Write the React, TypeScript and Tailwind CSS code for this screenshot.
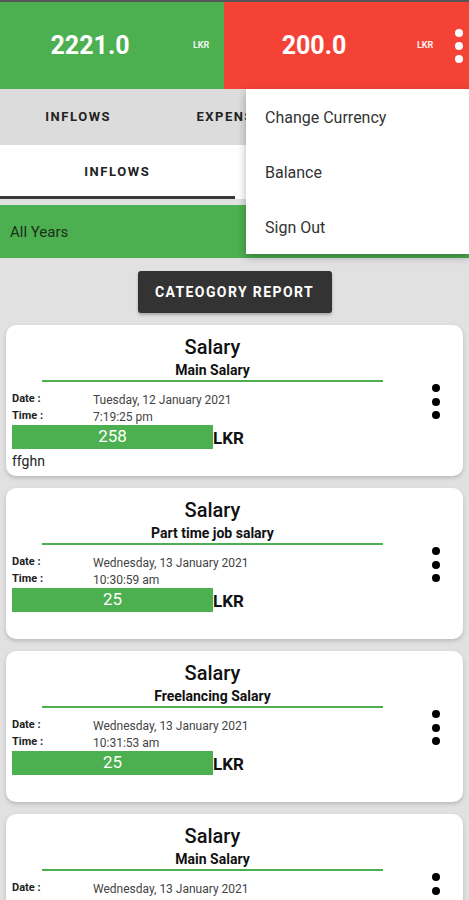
import React from 'react';

type Entry = {
  category: string;
  title: string;
  date: string;
  time: string;
  amount: string;
  note?: string;
};

const ENTRIES: Entry[] = [
  { category: 'Salary', title: 'Main Salary', date: 'Tuesday, 12 January 2021', time: '7:19:25 pm', amount: '258', note: 'ffghn' },
  { category: 'Salary', title: 'Part time job salary', date: 'Wednesday, 13 January 2021', time: '10:30:59 am', amount: '25' },
  { category: 'Salary', title: 'Freelancing Salary', date: 'Wednesday, 13 January 2021', time: '10:31:53 am', amount: '25' },
  { category: 'Salary', title: 'Main Salary', date: 'Wednesday, 13 January 2021', time: '10:31:59 am', amount: '50' },
];

function Dots({ color, gap }: { color: string; gap: string }) {
  return (
    <div className={`flex flex-col items-center ${gap}`}>
      <span className={`h-[8px] w-[8px] rounded-full ${color}`} />
      <span className={`h-[8px] w-[8px] rounded-full ${color}`} />
      <span className={`h-[8px] w-[8px] rounded-full ${color}`} />
    </div>
  );
}

function Total({ value }: { value: string }) {
  return (
    <div className="flex w-[224px] items-center">
      <span className="w-[180px] text-center text-[25px] font-bold text-white">{value}</span>
      <span className="ml-[13px] pt-[1px] text-[9px] font-bold text-white/90">LKR</span>
    </div>
  );
}

function EntryCard({ entry }: { entry: Entry }) {
  return (
    <div className="mx-[6px] flex h-[151px] rounded-[10px] bg-white shadow-[0_2px_4px_rgba(0,0,0,0.18)]">
      <div className="w-[413px] px-[6px] pt-[10px]">
        <div className="text-center text-[20px] font-medium leading-[24px] text-[#111]">{entry.category}</div>
        <div className="mt-[2px] text-center text-[14px] font-bold leading-[18px] text-[#111]">{entry.title}</div>
        <div className="mx-auto mt-[1px] h-[2px] w-[341px] bg-[#4caf50]" />
        <div className="mt-[9px] flex h-[17px] items-center">
          <span className="w-[81px] text-[11px] font-bold text-[#222]">Date :</span>
          <span className="text-[12px] text-[#444]">{entry.date}</span>
        </div>
        <div className="flex h-[17px] items-center">
          <span className="w-[81px] text-[11px] font-bold text-[#222]">Time :</span>
          <span className="text-[12px] text-[#444]">{entry.time}</span>
        </div>
        <div className="flex h-[24px] items-center">
          <span className="flex h-full w-[201px] items-center justify-center bg-[#4caf50] text-[17px] text-white">
            {entry.amount}
          </span>
          <span className="pt-[4px] text-[17px] font-bold text-[#111]">LKR</span>
        </div>
        {entry.note && <div className="mt-[3px] text-[14px] leading-[18px] text-[#222]">{entry.note}</div>}
      </div>
      <div className="pl-[13px] pt-[59px]">
        <Dots color="bg-black" gap="gap-[5.5px]" />
      </div>
    </div>
  );
}

export default function App() {
  return (
    <div className="relative h-[900px] w-[469px] overflow-hidden bg-[#e1e1e1] font-['Roboto',sans-serif]">
      <div className="h-[2px] bg-[#555]" />
      <div className="flex h-[87px]">
        <div className="flex items-center bg-[#4caf50]">
          <Total value="2221.0" />
        </div>
        <div className="flex flex-1 items-center bg-[#f44336]">
          <Total value="200.0" />
          <div className="pl-[7px]">
            <Dots color="bg-white" gap="gap-[5px]" />
          </div>
        </div>
      </div>

      <div className="grid h-[56px] grid-cols-3 bg-[#dcdcdc] text-[13px] font-bold tracking-[0.12em] text-[#222]">
        <div className="flex items-center justify-center">INFLOWS</div>
        <div className="flex items-center justify-center">EXPENSES</div>
        <div className="flex items-center justify-center">BALANCE</div>
      </div>

      <div className="grid h-[54px] grid-cols-2 bg-white text-[13px] font-bold tracking-[0.12em] text-[#222]">
        <div className="flex items-center justify-center border-b-[3px] border-[#3a3a3a] pt-[3px]">INFLOWS</div>
        <div className="flex items-center justify-center pt-[3px] text-[#666]">EXPENSES</div>
      </div>

      <div className="mt-[6px] flex h-[53px] items-center bg-[#4caf50] px-[10px] pt-[2px] text-[15px] text-[#1b2e1b]">
        All Years
      </div>

      <div className="flex justify-center pt-[13px] pb-[12px]">
        <button className="h-[42px] w-[194px] rounded-[3px] bg-[#333] text-[14px] font-bold tracking-[0.1em] text-white shadow-[0_2px_3px_rgba(0,0,0,0.25)]">
          CATEOGORY REPORT
        </button>
      </div>

      <div className="flex flex-col gap-[12px]">
        {ENTRIES.map((entry, i) => (
          <EntryCard key={i} entry={entry} />
        ))}
      </div>

      <div className="absolute left-[246px] top-[89px] w-[223px] bg-white shadow-[0_3px_8px_rgba(0,0,0,0.3)]">
        {['Change Currency', 'Balance', 'Sign Out'].map((item) => (
          <div key={item} className="flex h-[55px] items-center pl-[19px] pt-[2px] text-[16px] text-[#333]">
            {item}
          </div>
        ))}
      </div>
    </div>
  );
}
